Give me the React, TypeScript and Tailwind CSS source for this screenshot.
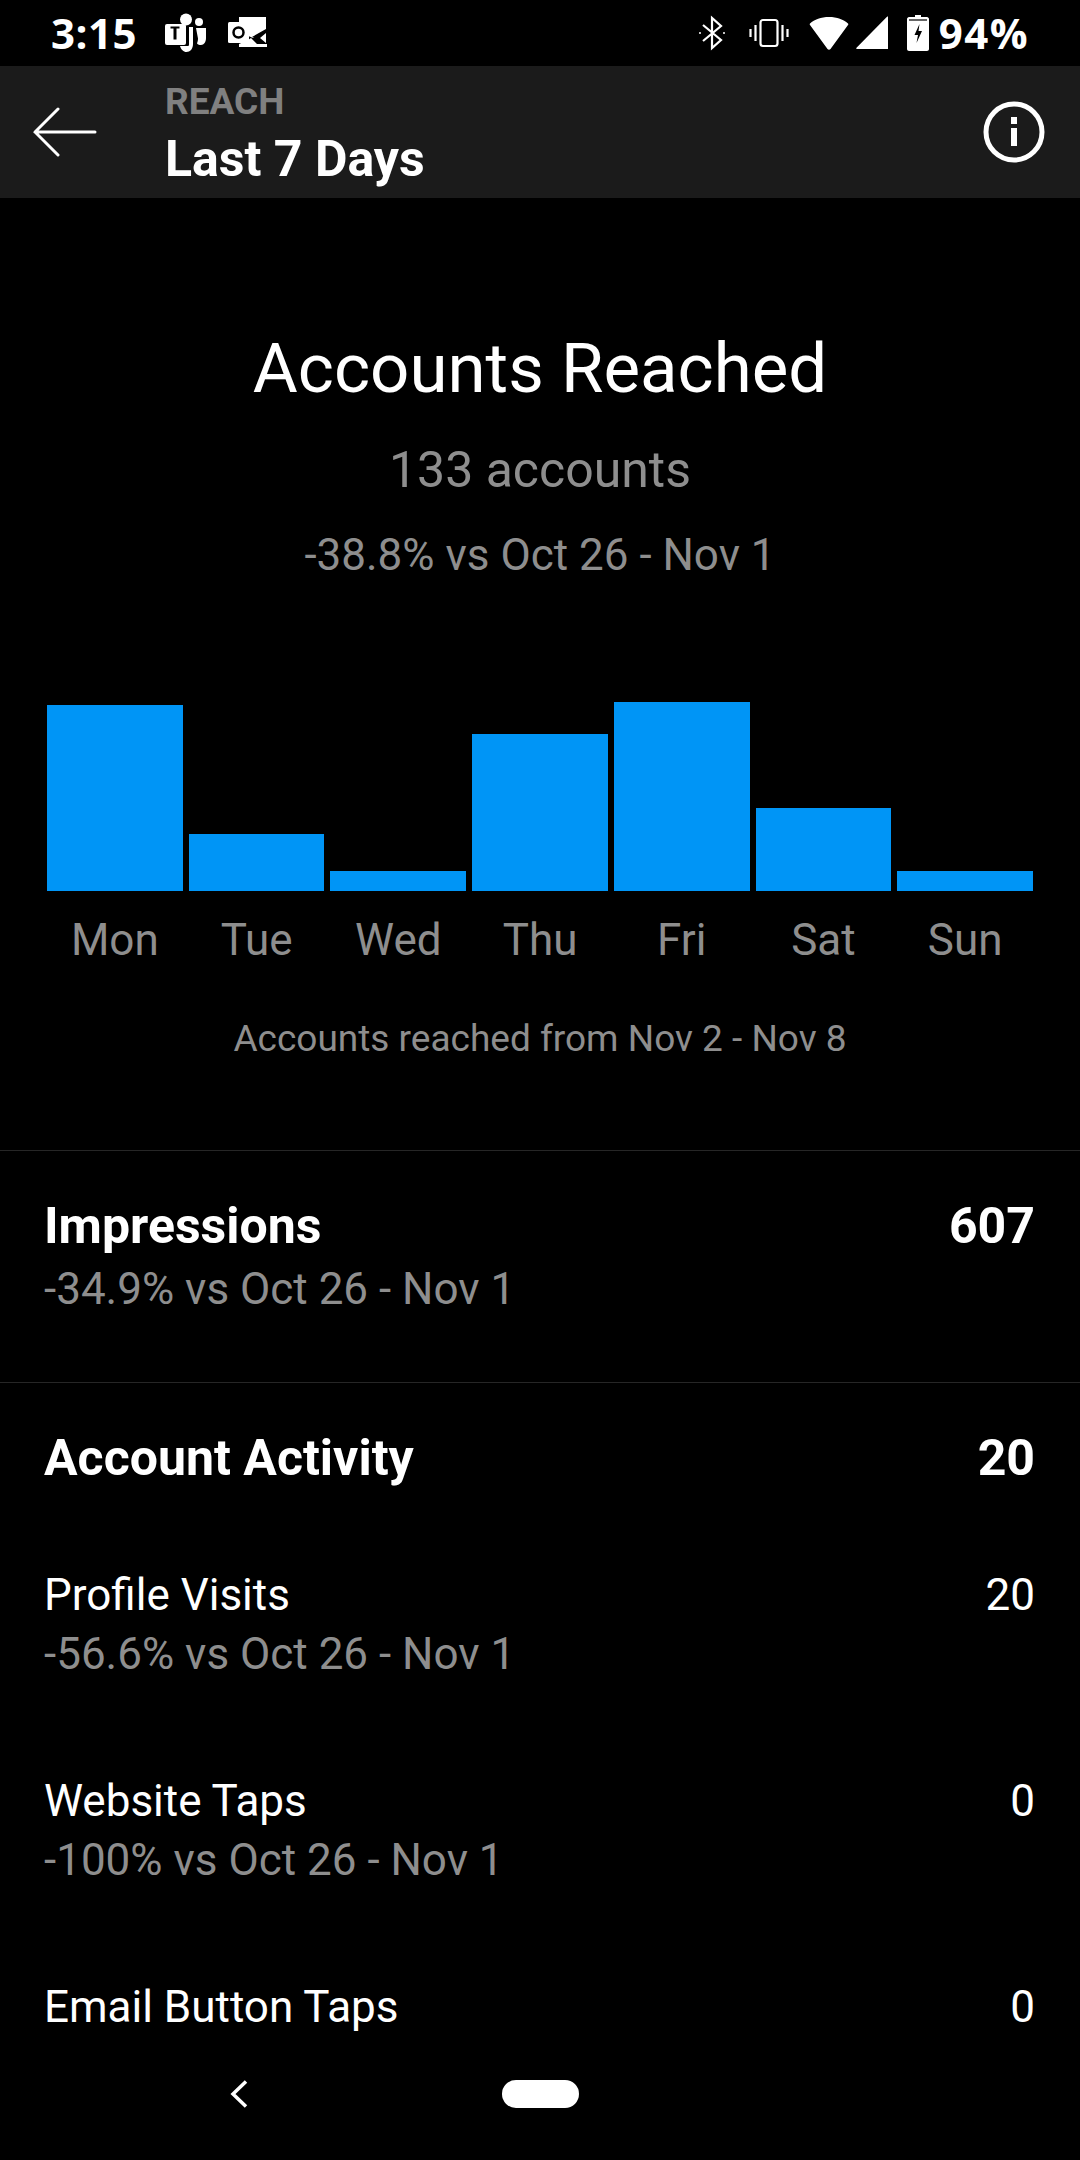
const bars = [
  { d: "Mon", h: 186 },
  { d: "Tue", h: 57 },
  { d: "Wed", h: 20 },
  { d: "Thu", h: 157 },
  { d: "Fri", h: 189 },
  { d: "Sat", h: 83 },
  { d: "Sun", h: 20 },
];

function Teams() {
  return (
    <svg width="42" height="40" viewBox="0 0 42 40" fill="#fff">
      <rect x="0" y="11" width="21" height="21" rx="2" />
      <path d="M8.500 16h-3v-2h9v2h-3v11h-3z" fill="#000" transform="translate(0 -.5)" />
      <circle cx="21" cy="6.500" r="6" />
      <circle cx="34" cy="9" r="4" />
      <path d="M15 33h7.500c1 0 1.500-.5 1.500-1.500V14h4v17c0 5-3 8-6.500 8-3 0-5.500-2.500-6.500-6z" />
      <path d="M31 15h10v10c0 4-2 7-5 7-1.500 0-3-.5-4-1.500.5-1.500 1-3 1-5z" />
    </svg>
  );
}

function Outlook() {
  return (
    <svg width="40" height="34" viewBox="0 0 40 34" fill="#fff">
      <path d="M11 1h27v13l-13 8-14-6z" />
      <rect x="0" y="6" width="21" height="21" rx="1.500" />
      <circle cx="10.500" cy="16.500" r="5" fill="none" stroke="#000" strokeWidth="2.500" />
      <path d="M24 21l14-8v2l-8 5 9 7-2 1-10-6z" fill="#000" />
      <path d="M11 28h18l-6-6-3 2zM38 17v10l-6-5z" />
      <path d="M11 28h28v3H11z" />
    </svg>
  );
}

function StatusIcons() {
  return (
    <div className="flex items-center">
      <svg width="28" height="36" viewBox="0 0 28 36" fill="none" stroke="#fff" strokeWidth="2.200" className="mr-[23px]">
        <path d="M5 10l18 15-9 8V3l9 8-18 15" />
        <circle cx="2" cy="18" r="1" fill="#fff" stroke="none" />
        <circle cx="26" cy="18" r="1" fill="#fff" stroke="none" />
      </svg>
      <svg width="40" height="30" viewBox="0 0 40 30" fill="none" stroke="#fff" strokeWidth="2.200" className="mr-[20px]">
        <rect x="11.500" y="2" width="17" height="26" rx="2.500" />
        <path d="M6.500 7v16M1.500 11v8M33.500 7v16M38.500 11v8" />
      </svg>
      <svg width="40" height="36" viewBox="0 0 40 36" fill="#fff" className="mr-[7px]">
        <path d="M20 2C12 2 5.500 4.500 1 8.500c-.5.5-.5 1 0 1.500l17.500 24c.8 1 2.200 1 3 0L39 10c.5-.5.5-1 0-1.500C34.500 4.500 28 2 20 2z" />
      </svg>
      <svg width="32" height="34" viewBox="0 0 32 34" fill="#fff" className="mr-[19px]">
        <path d="M32 1v31.500a.5.500 0 0 1-.5.500H1c-.7 0-1-.8-.5-1.300L31 .8c.4-.4 1-.2 1 .2z" />
      </svg>
      <svg width="22" height="36" viewBox="0 0 22 36" fill="#fff" className="mr-[10px]">
        <path d="M8 0h6v2h6c1 0 2 1 2 2v30c0 1-1 2-2 2H2c-1 0-2-1-2-2V4c0-1 1-2 2-2h6z" />
        <path d="M12.500 9l-5 11h3.500l-1.500 8 5.500-12h-3.500z" fill="#000" />
        <path d="M2 4h18v2H2z" fill="#000" opacity="0.600" />
      </svg>
      <span className="text-[42px] font-bold tracking-[1.5px] leading-none font-['Open_Sans','Noto_Sans',sans-serif]">94%</span>
    </div>
  );
}

function Row({ title, sub, value }: { title: string; sub?: string; value: string }) {
  return (
    <div className="flex justify-between pl-[44px] pr-[45px]">
      <div className="flex flex-col">
        <div className="text-[44px] leading-[58px]">{title}</div>
        {sub && <div className="text-[44px] leading-[58px] mt-[1px] text-[#8e8e8e]">{sub}</div>}
      </div>
      <div className="text-[44px] leading-[58px]">{value}</div>
    </div>
  );
}

export default function App() {
  return (
    <div className="w-[1080px] h-[2160px] bg-black text-white overflow-hidden flex flex-col font-['Roboto',sans-serif]">
      <div className="h-[66px] shrink-0 flex items-center justify-between pl-[51px] pr-[51px] z-10 bg-black">
        <div className="flex items-center">
          <span className="text-[42px] font-bold leading-none tracking-[0.5px] mr-[28px] font-['Open_Sans','Noto_Sans',sans-serif]">3:15</span>
          <div className="mr-[21px]"><Teams /></div>
          <Outlook />
        </div>
        <StatusIcons />
      </div>

      <div className="h-[132px] shrink-0 bg-[#1b1b1b] flex items-center pl-[33px] pr-[35px]">
        <svg width="64" height="50" viewBox="0 0 64 50" fill="none" stroke="#fff" strokeWidth="3" strokeLinecap="round" className="shrink-0">
          <path d="M2 25h60M25 2L2 25l23 23" />
        </svg>
        <div className="ml-[68px] flex-1 flex flex-col pt-[7px]">
          <div className="text-[37px] leading-[44px] font-bold text-[#808080] -mt-[2px]">REACH</div>
          <div className="text-[50px] leading-[60px] font-bold mt-[5px]">Last 7 Days</div>
        </div>
        <svg width="62" height="62" viewBox="0 0 62 62" fill="none" className="shrink-0">
          <circle cx="31" cy="31" r="28" stroke="#fff" strokeWidth="5" />
          <rect x="28" y="16" width="6" height="7" fill="#fff" />
          <rect x="28" y="27" width="6" height="18" fill="#fff" />
        </svg>
      </div>

      <div className="flex-1 min-h-0 overflow-hidden flex flex-col">
        <div className="flex flex-col items-center pt-[126px]">
          <h1 className="text-[69px] leading-[90px] font-normal">Accounts Reached</h1>
          <div className="text-[50px] leading-[60px] mt-[26px] text-[#8e8e8e]">133 accounts</div>
          <div className="text-[44px] leading-[56px] mt-[27px] text-[#8e8e8e]">-38.8% vs Oct 26 - Nov 1</div>
        </div>

        <div className="flex items-end gap-[6px] px-[47px] h-[189px] mt-[119px] shrink-0">
          {bars.map((b) => (
            <div key={b.d} className="flex-1 bg-[#0095f6]" style={{ height: b.h }} />
          ))}
        </div>
        <div className="flex gap-[6px] px-[47px] mt-[24px] shrink-0">
          {bars.map((b) => (
            <div key={b.d} className="flex-1 text-center text-[44px] leading-[50px] text-[#8e8e8e]">{b.d}</div>
          ))}
        </div>
        <div className="text-center text-[37px] leading-[48px] mt-[50px] text-[#8e8e8e] shrink-0">Accounts reached from Nov 2 - Nov 8</div>

        <div className="h-[1px] bg-[#262626] mt-[87px] shrink-0" />
        <div className="pt-[45px] pb-[65px] shrink-0">
          <div className="flex justify-between pl-[44px] pr-[45px]">
            <div>
              <div className="text-[50px] leading-[60px] font-bold">Impressions</div>
              <div className="text-[44px] leading-[56px] mt-[5px] text-[#8e8e8e]">-34.9% vs Oct 26 - Nov 1</div>
            </div>
            <div className="text-[50px] leading-[60px] font-bold">607</div>
          </div>
        </div>
        <div className="h-[1px] bg-[#262626] shrink-0" />

        <div className="pt-[45px] flex flex-col shrink-0">
          <div className="flex justify-between pl-[44px] pr-[45px]">
            <div className="text-[50px] leading-[60px] font-bold">Account Activity</div>
            <div className="text-[50px] leading-[60px] font-bold">20</div>
          </div>
          <div className="mt-[78px]"><Row title="Profile Visits" sub="-56.6% vs Oct 26 - Nov 1" value="20" /></div>
          <div className="mt-[89px]"><Row title="Website Taps" sub="-100% vs Oct 26 - Nov 1" value="0" /></div>
          <div className="mt-[89px]"><Row title="Email Button Taps" value="0" /></div>
        </div>
      </div>

      <div className="h-[126px] shrink-0 bg-black flex items-center relative pb-[6px]">
        <svg width="18" height="28" viewBox="0 0 18 28" fill="none" stroke="#fff" strokeWidth="3.500" className="ml-[230px]">
          <path d="M16 1.500L3 14l13 12.500" />
        </svg>
        <div className="ml-[254px] w-[77px] h-[28px] rounded-full bg-white" />
      </div>
    </div>
  );
}
